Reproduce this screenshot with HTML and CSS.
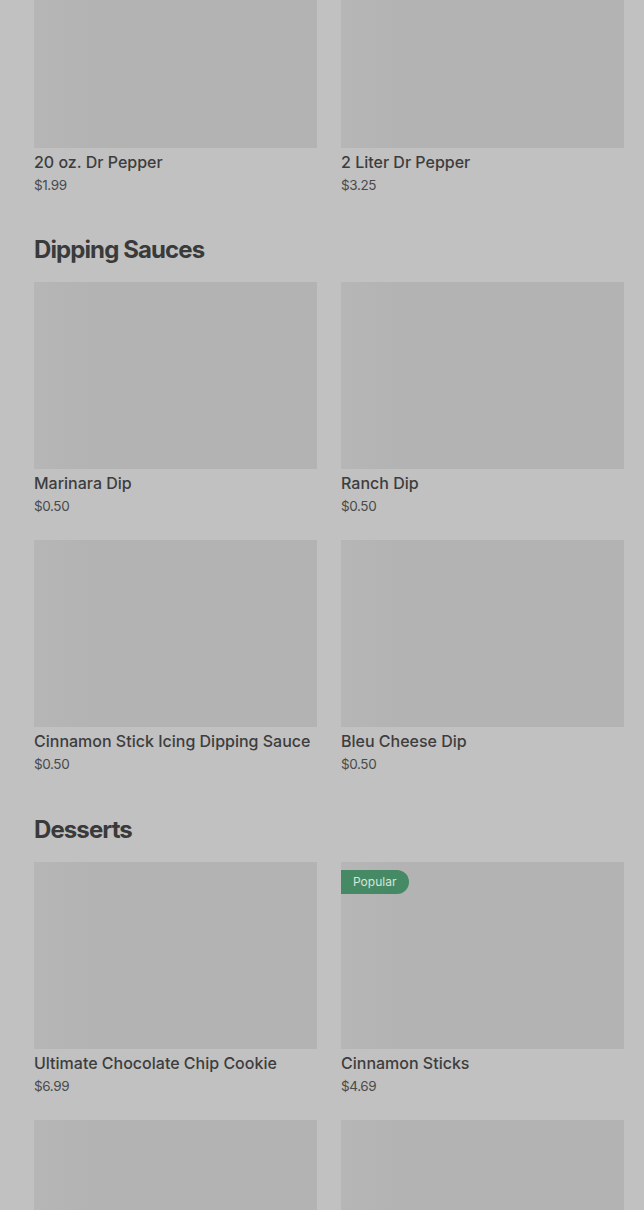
FILE: index.html
```html
<!DOCTYPE html>
<html lang="en">
<head>
    <meta charset="UTF-8">
    <meta name="viewport" content="width=device-width, initial-scale=1.0">
    <title>Menu</title>
    <link rel="stylesheet" href="styles.css">
</head>
<body>
    <div class="menu">
        <section class="section first">
            <div class="grid">
                <div class="card">
                    <div class="photo"></div>
                    <div class="name">20 oz. Dr Pepper</div>
                    <div class="price">$1.99</div>
                </div>
                <div class="card">
                    <div class="photo"></div>
                    <div class="name">2 Liter Dr Pepper</div>
                    <div class="price">$3.25</div>
                </div>
            </div>
        </section>

        <section class="section">
            <h2 class="heading">Dipping Sauces</h2>
            <div class="grid">
                <div class="card">
                    <div class="photo"></div>
                    <div class="name">Marinara Dip</div>
                    <div class="price">$0.50</div>
                </div>
                <div class="card">
                    <div class="photo"></div>
                    <div class="name">Ranch Dip</div>
                    <div class="price">$0.50</div>
                </div>
                <div class="card">
                    <div class="photo"></div>
                    <div class="name">Cinnamon Stick Icing Dipping Sauce</div>
                    <div class="price">$0.50</div>
                </div>
                <div class="card">
                    <div class="photo"></div>
                    <div class="name">Bleu Cheese Dip</div>
                    <div class="price">$0.50</div>
                </div>
            </div>
        </section>

        <section class="section">
            <h2 class="heading">Desserts</h2>
            <div class="grid">
                <div class="card">
                    <div class="photo"></div>
                    <div class="name">Ultimate Chocolate Chip Cookie</div>
                    <div class="price">$6.99</div>
                </div>
                <div class="card">
                    <div class="photo">
                        <span class="badge">Popular</span>
                    </div>
                    <div class="name">Cinnamon Sticks</div>
                    <div class="price">$4.69</div>
                </div>
                <div class="card">
                    <div class="photo"></div>
                </div>
                <div class="card">
                    <div class="photo"></div>
                </div>
            </div>
        </section>
    </div>
</body>
</html>
```

FILE: styles.css
```css
/* page */
body{
  margin: 0;
  background-color: #c1c1c1;
  font-family: Inter, "Noto Sans", sans-serif;
  color: #3b3b3b;
  overflow: hidden;
}
.menu{
  width: 590px;
  padding-left: 34px;
}
.section.first{
  margin-top: -39px;
}
.heading{
  margin: 39px 0 16px 0;
  font-size: 24px;
  line-height: 32px;
  font-weight: 700;
  letter-spacing: -0.9px;
  color: #3a3a3a;
}
.first + .section .heading{
  margin-top: 38px;
}
/* items */
.grid{
  display: grid;
  grid-template-columns: 283px 283px;
  column-gap: 24px;
  row-gap: 23px;
}
.photo{
  position: relative;
  height: 187px;
  background: linear-gradient(90deg, #b6b6b6 0%, #b3b3b3 20%, #b3b3b3 100%);
}
.name{
  margin-top: 2px;
  font-size: 16px;
  line-height: 24px;
  font-weight: 500;
  color: #3d3d3d;
}
.price{
  font-size: 13.5px;
  line-height: 22px;
  color: #4a4a4a;
  letter-spacing: -0.4px;
}
.badge{
  position: absolute;
  top: 8px;
  left: 0;
  height: 24px;
  line-height: 24px;
  padding: 0 13px 0 12px;
  border-radius: 0 12px 12px 0;
  background-color: #458a65;
  color: #d6e6db;
  font-size: 12px;
}
```
